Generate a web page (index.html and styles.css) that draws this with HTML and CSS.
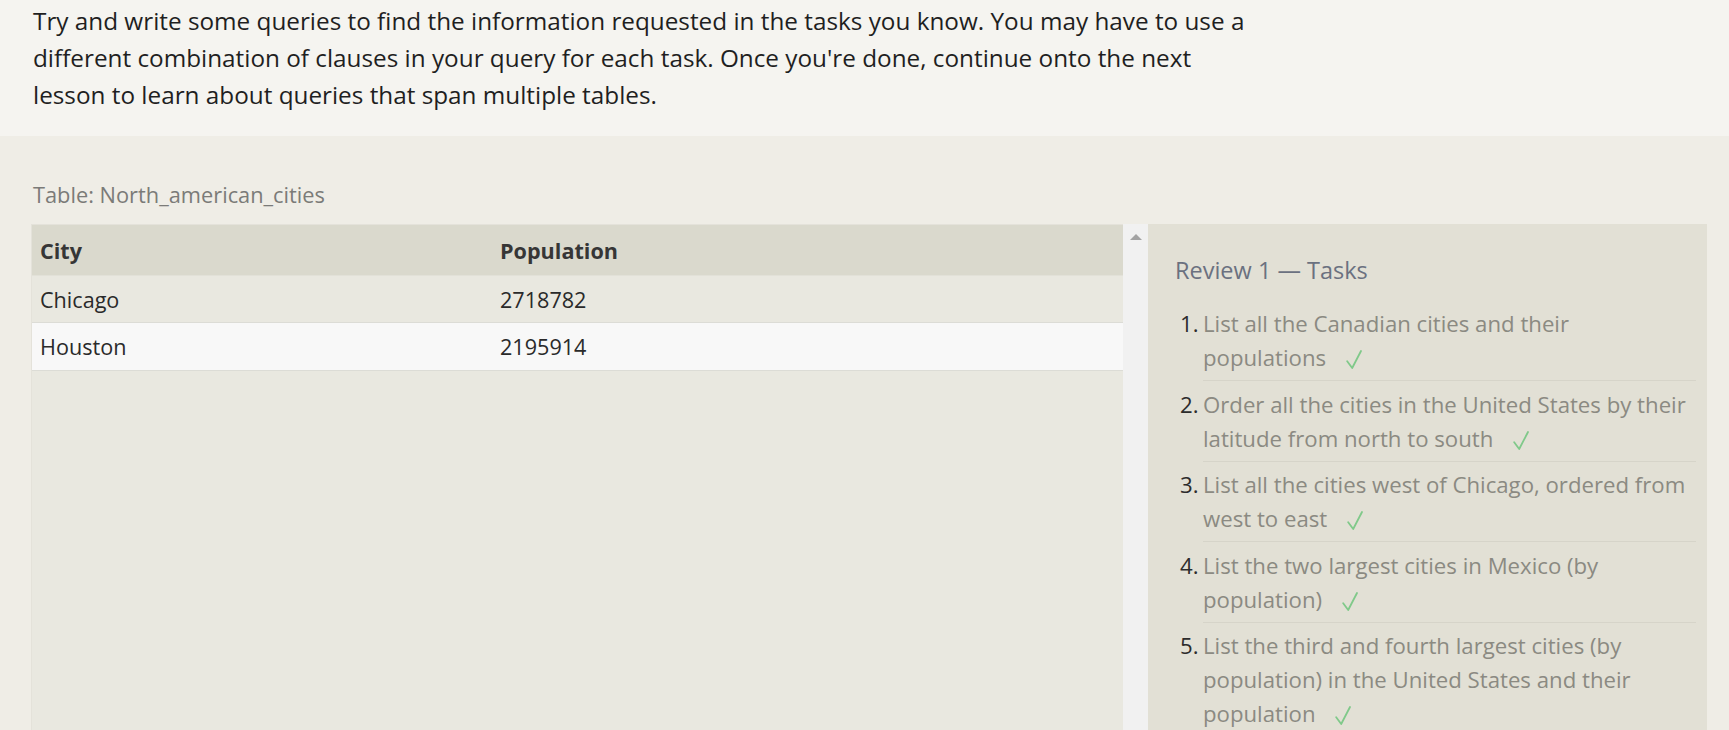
FILE: index.html
```html
<!DOCTYPE html>
<html lang="en">
<head>
<meta charset="utf-8">
<title>Review 1 — Tasks</title>
<link rel="stylesheet" href="styles.css">
</head>
<body>
<section class="intro">
  <p>Try and write some queries to find the information requested in the tasks you know. You may have to use a different combination of clauses in your query for each task. Once you're done, continue onto the next lesson to learn about queries that span multiple tables.</p>
</section>
<section class="workspace">
  <div class="caption">Table: North_american_cities</div>
  <div class="panes">
    <div class="table-pane">
      <table class="results">
        <thead>
          <tr><th class="col-city">City</th><th>Population</th></tr>
        </thead>
        <tbody>
          <tr><td>Chicago</td><td>2718782</td></tr>
          <tr class="alt"><td>Houston</td><td>2195914</td></tr>
        </tbody>
      </table>
    </div>
    <div class="scrollbar"><span class="arrow-up"></span></div>
    <aside class="tasks">
      <h2 class="tasks-title">Review 1 — Tasks</h2>
      <ol class="task-list">
        <li><span class="num">1.</span><div class="task-text">List all the Canadian cities and their populations <svg class="check" viewBox="0 0 16 19" width="16" height="19" aria-label="done"><path d="M1.2 11.2 L6.2 18 L15 1" /></svg></div></li>
        <li><span class="num">2.</span><div class="task-text">Order all the cities in the United States by their latitude from north to south <svg class="check" viewBox="0 0 16 19" width="16" height="19" aria-label="done"><path d="M1.2 11.2 L6.2 18 L15 1" /></svg></div></li>
        <li><span class="num">3.</span><div class="task-text">List all the cities west of Chicago, ordered from west to east <svg class="check" viewBox="0 0 16 19" width="16" height="19" aria-label="done"><path d="M1.2 11.2 L6.2 18 L15 1" /></svg></div></li>
        <li><span class="num">4.</span><div class="task-text">List the two largest cities in Mexico (by population) <svg class="check" viewBox="0 0 16 19" width="16" height="19" aria-label="done"><path d="M1.2 11.2 L6.2 18 L15 1" /></svg></div></li>
        <li><span class="num">5.</span><div class="task-text">List the third and fourth largest cities (by population) in the United States and their population <svg class="check" viewBox="0 0 16 19" width="16" height="19" aria-label="done"><path d="M1.2 11.2 L6.2 18 L15 1" /></svg></div></li>
      </ol>
    </aside>
  </div>
</section>
</body>
</html>
```
FILE: styles.css
```css
html, body {
  margin: 0;
  padding: 0;
  height: 100%;
  overflow: hidden;
}
body {
  font-family: "Open Sans", "Noto Sans", sans-serif;
  background: #efede6;
  color: #222;
}
.intro {
  background: #f5f4f0;
  padding: 2px 33px 23px;
}
.intro p {
  margin: 0;
  max-width: 1222px;
  font-size: 24.3px;
  line-height: 37px;
  color: #1f1f1f;
}
.workspace {
  padding: 44px 22px 0 31px;
}
.caption {
  padding-left: 2px;
  font-size: 21.8px;
  line-height: 30px;
  color: #7b7b78;
  margin-bottom: 14px;
}
.panes {
  display: flex;
  height: 520px;
}
.table-pane {
  width: 1092px;
  background: #e9e8e0;
  border-top: 1px solid #e4e2da;
  border-left: 1px solid #e4e2da;
  box-sizing: border-box;
}
.results {
  width: 100%;
  border-collapse: collapse;
  font-size: 21.6px;
}
.results th {
  text-align: left;
  font-weight: 700;
  color: #363636;
  background: #dad9cd;
  height: 50px;
  padding: 0 8px;
  border-bottom: 1px solid #e2e1d8;
}
.results .col-city {
  width: 444px;
}
.results td {
  height: 46px;
  padding: 0 8px;
  color: #2a2a2a;
  background: #e9e8e0;
  border-bottom: 1px solid #dcdcd6;
}
.results tr.alt td {
  background: #f8f8f8;
  height: 47px;
}
.scrollbar {
  width: 25px;
  background: #f1f1f1;
  display: flex;
  justify-content: center;
  padding-top: 10px;
  box-sizing: border-box;
}
.arrow-up {
  width: 0;
  height: 0;
  border-left: 6px solid transparent;
  border-right: 6px solid transparent;
  border-bottom: 6px solid #a3a3a3;
}
.tasks {
  flex: 1;
  background: #e2e0d5;
  padding: 31px 11px 0 27px;
}
.tasks-title {
  margin: 0 0 22px;
  font-size: 23.5px;
  font-weight: 400;
  line-height: 30px;
  color: #6b7180;
}
.task-list {
  list-style: none;
  margin: 0;
  padding: 0;
}
.task-list li {
  display: flex;
  padding-left: 5px;
  font-size: 22.2px;
  line-height: 34px;
}
.num {
  width: 23px;
  flex: none;
  color: #2c2c2c;
}
.task-text {
  flex: 1;
  color: #8b8a82;
  padding: 0 0 5px;
  margin-bottom: 6.6px;
  border-bottom: 1px solid #d6d4c9;
}
.check {
  margin-left: 14px;
  vertical-align: -3px;
  fill: none;
  stroke: #80c98a;
  stroke-width: 1.8;
  stroke-linecap: round;
  stroke-linejoin: round;
}
```
